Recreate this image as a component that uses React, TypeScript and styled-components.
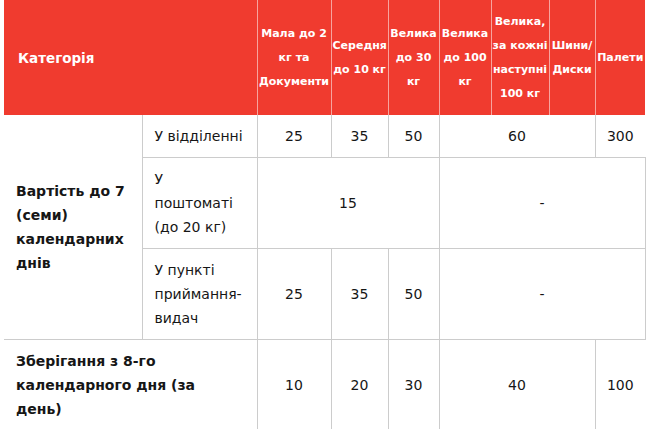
import React from "react";
import styled, { createGlobalStyle } from "styled-components";

const GlobalStyle = createGlobalStyle`
  html, body {
    margin: 0;
    padding: 0;
    background: #ffffff;
  }
  body {
    font-family: "DejaVu Sans", Verdana, sans-serif;
  }
`;

const Page = styled.div`
  padding: 0 4px;
`;

const Table = styled.table`
  border-collapse: collapse;
  table-layout: fixed;
  width: 641px;
  color: #161616;
`;

const HeadCell = styled.th<{ $left?: boolean }>`
  background: #f03b2f;
  color: #ffffff;
  font-size: ${(p) => (p.$left ? "13.5px" : "11px")};
  font-weight: bold;
  line-height: 24px;
  padding: 9px 1px;
  height: 115px;
  box-sizing: border-box;
  text-align: ${(p) => (p.$left ? "left" : "center")};
  padding-left: ${(p) => (p.$left ? "14px" : "1px")};
  vertical-align: middle;
  white-space: nowrap;
  border-left: 1px solid #f7a49e;
  &:first-child {
    border-left: none;
  }
`;

const Cell = styled.td<{ $closed?: boolean; $label?: boolean; $bold?: boolean }>`
  font-size: 14px;
  line-height: 24px;
  padding: 9px ${(p) => (p.$label || p.$bold ? "12px" : "2px")};
  text-align: ${(p) => (p.$label || p.$bold ? "left" : "center")};
  font-weight: ${(p) => (p.$bold ? "bold" : "normal")};
  vertical-align: middle;
  white-space: nowrap;
  border: 1px solid #cccccc;
  border-top: none;
  border-right: ${(p) => (p.$closed ? "1px solid #cccccc" : "none")};
  &:first-child {
    border-left: none;
  }
`;

const widths = [138, 115, 74, 57, 51, 52, 58, 46, 50];

export default function App() {
  return (
    <>
      <GlobalStyle />
      <Page>
        <Table>
          <colgroup>
            {widths.map((w, i) => (
              <col key={i} style={{ width: w }} />
            ))}
          </colgroup>
          <thead>
            <tr>
              <HeadCell colSpan={2} $left>
                Категорія
              </HeadCell>
              <HeadCell>
                Мала до 2<br />
                кг та
                <br />
                Документи
              </HeadCell>
              <HeadCell>
                Середня
                <br />
                до 10 кг
              </HeadCell>
              <HeadCell>
                Велика
                <br />
                до 30
                <br />
                кг
              </HeadCell>
              <HeadCell>
                Велика
                <br />
                до 100
                <br />
                кг
              </HeadCell>
              <HeadCell>
                Велика,
                <br />
                за кожні
                <br />
                наступні
                <br />
                100 кг
              </HeadCell>
              <HeadCell>
                Шини/
                <br />
                Диски
              </HeadCell>
              <HeadCell>Палети</HeadCell>
            </tr>
          </thead>
          <tbody>
            <tr>
              <Cell rowSpan={3} $bold>
                Вартість до 7
                <br />
                (семи)
                <br />
                календарних
                <br />
                днів
              </Cell>
              <Cell $label>У відділенні</Cell>
              <Cell>25</Cell>
              <Cell>35</Cell>
              <Cell>50</Cell>
              <Cell colSpan={3}>60</Cell>
              <Cell>300</Cell>
            </tr>
            <tr>
              <Cell $label style={{ borderLeft: "1px solid #cccccc" }}>
                У<br />
                поштоматі
                <br />
                (до 20 кг)
              </Cell>
              <Cell colSpan={3}>15</Cell>
              <Cell colSpan={4} $closed>
                -
              </Cell>
            </tr>
            <tr>
              <Cell $label style={{ borderLeft: "1px solid #cccccc" }}>
                У пункті
                <br />
                приймання-
                <br />
                видач
              </Cell>
              <Cell>25</Cell>
              <Cell>35</Cell>
              <Cell>50</Cell>
              <Cell colSpan={4} $closed>
                -
              </Cell>
            </tr>
            <tr>
              <Cell colSpan={2} $bold>
                Зберігання з 8-го
                <br />
                календарного дня (за
                <br />
                день)
              </Cell>
              <Cell>10</Cell>
              <Cell>20</Cell>
              <Cell>30</Cell>
              <Cell colSpan={3}>40</Cell>
              <Cell>100</Cell>
            </tr>
          </tbody>
        </Table>
      </Page>
    </>
  );
}
